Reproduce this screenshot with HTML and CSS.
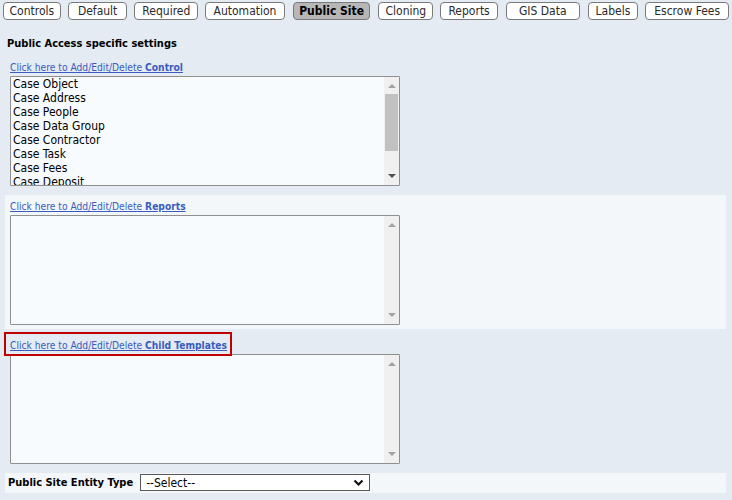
FILE: index.html
```html
<!DOCTYPE html>
<html>
<head>
<meta charset="utf-8">
<link rel="stylesheet" href="styles.css">
</head>
<body>
<div class="tabs">
  <span class="tab">Controls</span>
  <span class="tab">Default</span>
  <span class="tab">Required</span>
  <span class="tab">Automation</span>
  <span class="tab active">Public Site</span>
  <span class="tab">Cloning</span>
  <span class="tab">Reports</span>
  <span class="tab">GIS Data</span>
  <span class="tab">Labels</span>
  <span class="tab">Escrow Fees</span>
</div>
<div class="title">Public Access specific settings</div>
<div class="rows">
  <div class="row">
    <a class="link" href="#">Click here to Add/Edit/Delete <b>Control</b></a>
    <div class="listbox">
      <div class="items">
        <div>Case Object</div>
        <div>Case Address</div>
        <div>Case People</div>
        <div>Case Data Group</div>
        <div>Case Contractor</div>
        <div>Case Task</div>
        <div>Case Fees</div>
        <div>Case Deposit</div>
      </div>
      <div class="sb">
        <span class="arr up"></span>
        <span class="thumb"></span>
        <span class="arr down dark"></span>
      </div>
    </div>
  </div>
  <div class="row light">
    <a class="link" href="#">Click here to Add/Edit/Delete <b>Reports</b></a>
    <div class="listbox">
      <div class="items"></div>
      <div class="sb">
        <span class="arr up"></span>
        <span class="arr down"></span>
      </div>
    </div>
  </div>
  <div class="row">
    <a class="link" href="#">Click here to Add/Edit/Delete <b>Child Templates</b></a>
    <span class="highlight"></span>
    <div class="listbox">
      <div class="items"></div>
      <div class="sb">
        <span class="arr up"></span>
        <span class="arr down"></span>
      </div>
    </div>
  </div>
  <div class="row light entity">
    <span class="label">Public Site Entity Type</span>
    <div class="select">
      <span>--Select--</span>
      <svg width="11" height="8" viewBox="0 0 11 8"><path d="M1.5 1.5 L5.5 5.5 L9.5 1.5" fill="none" stroke="#111" stroke-width="2.2"/></svg>
    </div>
  </div>
</div>
</body>
</html>
```
FILE: styles.css
```css
html, body {
  margin: 0;
  padding: 0;
  background: #e4ebf2;
  font-family: Tahoma, "DejaVu Sans Condensed", "DejaVu Sans", sans-serif;
  color: #000;
}
.tabs {
  display: flex;
  gap: 7px;
  padding: 2px 3px 0 3px;
}
.tab {
  box-sizing: border-box;
  height: 18px;
  border: 1px solid #7a7a7a;
  border-radius: 4px;
  background: #fff;
  font-size: 12px;
  line-height: 16px;
  text-align: center;
  color: #2a2a2a;
}
.tab:nth-child(1) { width: 58px; }
.tab:nth-child(2) { width: 60px; }
.tab:nth-child(3) { width: 64px; }
.tab:nth-child(4) { width: 80px; }
.tab:nth-child(5) { width: 78px; margin-left: 1px; }
.tab:nth-child(6) { width: 55px; margin-left: 1px; }
.tab:nth-child(7) { width: 58px; }
.tab:nth-child(8) { width: 74px; margin-left: 1px; }
.tab:nth-child(9) { width: 51px; margin-left: 1px; }
.tab:nth-child(10) { width: 84px; }
.tab.active {
  background: #b7b7b7;
  font-weight: bold;
  color: #000;
}
.title {
  font-size: 11px;
  font-weight: bold;
  line-height: 14px;
  padding: 17px 0 0 7px;
  height: 19px;
}
.rows {
  display: flex;
  flex-direction: column;
  gap: 5px;
  width: 721px;
  margin-left: 5px;
}
.row {
  position: relative;
  padding: 4px 5px;
  display: flex;
  flex-direction: column;
  align-items: flex-start;
}
.row.light { background: #f3f7fa; }
.link {
  font-size: 10.2px;
  line-height: 16px;
  height: 16px;
  color: #3a5cc0;
  text-decoration: underline;
}
.link b { font-weight: bold; }
.listbox {
  box-sizing: border-box;
  width: 390px;
  height: 110px;
  border: 1px solid #8f8f8f;
  border-radius: 1px;
  background: #f7fbfe;
  display: flex;
  overflow: hidden;
}
.items {
  flex: 1;
  padding: 0 0 0 2px;
  font-size: 12px;
  line-height: 14px;
  overflow: hidden;
}
.sb {
  width: 15px;
  background: #f0f0f0;
  display: flex;
  flex-direction: column;
  align-items: center;
}
.arr {
  width: 0;
  height: 0;
  border-left: 4px solid transparent;
  border-right: 4px solid transparent;
}
.arr.up {
  border-bottom: 4px solid #a3a3a3;
  margin-top: 7px;
}
.arr.down {
  border-top: 4px solid #a3a3a3;
  margin-top: auto;
  margin-bottom: 7px;
}
.arr.down.dark { border-top-color: #505050; }
.thumb {
  width: 13px;
  height: 57px;
  background: #c1c1c1;
  margin-top: 6px;
}
.highlight {
  position: absolute;
  left: -1px;
  top: -2px;
  width: 224px;
  height: 20px;
  border: 2px solid #c00000;
}
.entity {
  flex-direction: row;
  align-items: center;
  padding: 1px 0 2px 3px;
  gap: 7px;
}
.label {
  font-size: 11px;
  font-weight: bold;
}
.select {
  box-sizing: border-box;
  width: 230px;
  height: 17px;
  border: 1px solid #595959;
  background: #fff;
  display: flex;
  align-items: center;
  justify-content: space-between;
  padding: 0 5px;
  font-size: 12px;
  color: #000;
}
```
